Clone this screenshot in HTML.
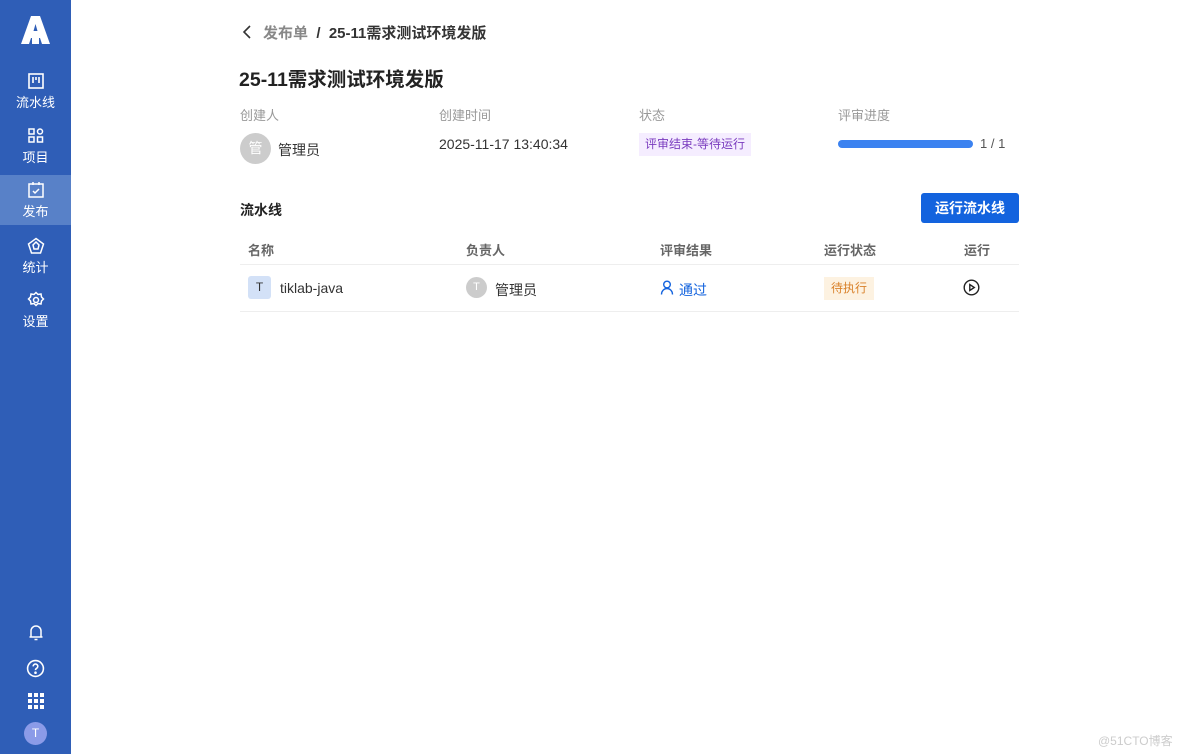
<!DOCTYPE html>
<html><head><meta charset="utf-8"><style>
*{margin:0;padding:0;box-sizing:border-box}
body{width:1184px;height:754px;background:#fff;font-family:"Liberation Sans","Noto Sans CJK SC",sans-serif;color:#333;position:relative;overflow:hidden}
.side{position:absolute;left:0;top:0;width:71px;height:754px;background:#2f5eb7}
.nav{position:absolute;left:0;width:71px;height:50px;color:#fff;text-align:center;font-size:13px}
.nav svg{display:block;margin:0 auto 2px}
.act{background:#5881c8}
.abs{position:absolute}
.lbl{font-size:13px;color:#999}
</style></head><body>
<div class="side">
 <svg class="abs" style="left:21px;top:16px" width="29" height="28" viewBox="0 0 29 28" fill="#fff"><path d="M10 0h9l10 28h-8l-2-6h-9l-2 6H0zM12.5 15h4l-2-7z"/><rect x="11" y="21" width="7" height="7"/></svg>
 <div class="nav" style="top:72px"><svg width="18" height="18" viewBox="0 0 18 18" fill="none" stroke="#fff" stroke-width="1.6"><rect x="2" y="2" width="14" height="14"/><path d="M6 5v6M9 5v3M12 5v6"/></svg>流水线</div>
 <div class="nav" style="top:127px"><svg width="18" height="18" viewBox="0 0 18 18" fill="none" stroke="#fff" stroke-width="1.5"><rect x="2" y="2" width="5" height="5"/><circle cx="13" cy="4.5" r="2.5"/><rect x="2" y="10" width="5" height="5"/><rect x="10.5" y="10" width="5" height="5"/></svg>项目</div>
 <div class="nav act" style="top:175px;padding-top:6px;height:50px"><svg width="18" height="18" viewBox="0 0 18 18" fill="none" stroke="#fff" stroke-width="1.5"><rect x="2" y="3" width="14" height="13"/><path d="M6 1v3M12 1v3M6 10l2 2 4-4"/></svg>发布</div>
 <div class="nav" style="top:237px"><svg width="18" height="18" viewBox="0 0 18 18" fill="none" stroke="#fff" stroke-width="1.5"><path d="M9 1.5L16.5 7 13.5 16h-9L1.5 7z"/><path d="M9 5l3 3-1 4H7L6 8z"/></svg>统计</div>
 <div class="nav" style="top:291px"><svg width="18" height="18" viewBox="0 0 18 18" fill="none" stroke="#fff" stroke-width="1.5"><path d="M9 1.5l2 2 3-.5.5 3 2 2-2 2-.5 3-3-.5-2 2-2-2-3 .5-.5-3-2-2 2-2 .5-3 3 .5z"/><circle cx="9" cy="9" r="2.5"/></svg>设置</div>
 <svg class="abs" style="left:27px;top:623px" width="18" height="18" viewBox="0 0 18 18" fill="none" stroke="#fff" stroke-width="1.5"><path d="M4 14V8a5 5 0 0110 0v6zM2.5 14h13M7.5 16.5h3"/></svg>
 <svg class="abs" style="left:26px;top:659px" width="19" height="19" viewBox="0 0 18 18" fill="none" stroke="#fff" stroke-width="1.5"><circle cx="9" cy="9" r="7.5"/><path d="M6.8 7a2.2 2.2 0 114 1.2c-.8.6-1.8 1-1.8 2.3"/><circle cx="9" cy="13" r=".5" fill="#fff"/></svg>
 <svg class="abs" style="left:28px;top:693px" width="16" height="16" viewBox="0 0 16 16" fill="#fff"><rect x="0" y="0" width="4" height="4"/><rect x="6" y="0" width="4" height="4"/><rect x="12" y="0" width="4" height="4"/><rect x="0" y="6" width="4" height="4"/><rect x="6" y="6" width="4" height="4"/><rect x="12" y="6" width="4" height="4"/><rect x="0" y="12" width="4" height="4"/><rect x="6" y="12" width="4" height="4"/><rect x="12" y="12" width="4" height="4"/></svg>
 <div class="abs" style="left:24px;top:722px;width:23px;height:23px;border-radius:50%;background:#8b9be8;color:#fff;font-size:12px;text-align:center;line-height:23px">T</div>
</div>

<svg class="abs" style="left:241px;top:24px" width="12" height="16" viewBox="0 0 12 16" fill="none" stroke="#333" stroke-width="1.6"><path d="M9 2L3 8l6 6"/></svg>
<div class="abs" style="left:263px;top:22px;font-size:15px;font-weight:bold;color:#888">发布单 <span style="color:#333">&nbsp;/&nbsp; 25-11需求测试环境发版</span></div>
<div class="abs" style="left:239px;top:63px;font-size:19.5px;font-weight:bold;color:#222">25-11需求测试环境发版</div>

<div class="abs lbl" style="left:240px;top:105px">创建人</div>
<div class="abs lbl" style="left:439px;top:105px">创建时间</div>
<div class="abs lbl" style="left:639px;top:105px">状态</div>
<div class="abs lbl" style="left:838px;top:105px">评审进度</div>
<div class="abs" style="left:240px;top:133px;width:31px;height:31px;border-radius:50%;background:#ccc;color:#fff;font-size:14px;text-align:center;line-height:31px">管</div>
<div class="abs" style="left:278px;top:140px;font-size:14px">管理员</div>
<div class="abs" style="left:439px;top:136px;font-size:14px">2025-11-17 13:40:34</div>
<div class="abs" style="left:639px;top:133px;width:112px;height:23px;background:#f5edff;color:#7a3bbf;font-size:12px;text-align:center;line-height:23px">评审结束-等待运行</div>
<div class="abs" style="left:838px;top:140px;width:135px;height:8px;border-radius:4px;background:#3b82f0"></div>
<div class="abs" style="left:980px;top:136px;font-size:13px;color:#555">1 / 1</div>

<div class="abs" style="left:240px;top:200px;font-size:14px;font-weight:bold;color:#222">流水线</div>
<div class="abs" style="left:921px;top:193px;width:98px;height:30px;background:#1363de;border-radius:3px;color:#fff;font-size:14px;font-weight:bold;text-align:center;line-height:30px">运行流水线</div>

<div class="abs" style="left:240px;top:232px;width:779px;height:33px;border-bottom:1px solid #eee;font-size:13px;font-weight:bold;color:#666">
 <span class="abs" style="left:8px;top:8px">名称</span><span class="abs" style="left:226px;top:8px">负责人</span><span class="abs" style="left:420px;top:8px">评审结果</span><span class="abs" style="left:584px;top:8px">运行状态</span><span class="abs" style="left:724px;top:8px">运行</span>
</div>
<div class="abs" style="left:240px;top:265px;width:779px;height:47px;border-bottom:1px solid #eee;font-size:14px">
 <div class="abs" style="left:8px;top:11px;width:23px;height:23px;border-radius:3px;background:#d3e1f7;font-size:12px;text-align:center;line-height:23px;color:#333">T</div>
 <span class="abs" style="left:40px;top:15px">tiklab-java</span>
 <div class="abs" style="left:226px;top:12px;width:21px;height:21px;border-radius:50%;background:#ccc;color:#fff;font-size:11px;text-align:center;line-height:21px">T</div>
 <span class="abs" style="left:255px;top:15px">管理员</span>
 <svg class="abs" style="left:420px;top:15px" width="14" height="15" viewBox="0 0 14 15" fill="none" stroke="#1363de" stroke-width="1.4"><circle cx="7" cy="4.5" r="3.3"/><path d="M1.5 14.5c0-3.5 2.5-6 5.5-6s5.5 2.5 5.5 6"/></svg>
 <span class="abs" style="left:439px;top:15px;color:#1363de">通过</span>
 <div class="abs" style="left:584px;top:12px;width:50px;height:23px;background:#fdf2e1;color:#d9822b;font-size:12px;text-align:center;line-height:23px">待执行</div>
 <svg class="abs" style="left:723px;top:14px" width="17" height="17" viewBox="0 0 17 17" fill="none" stroke="#222" stroke-width="1.4"><circle cx="8.5" cy="8.5" r="7.3"/><path d="M6.8 5.5v6l4.5-3z"/></svg>
</div>
<div class="abs" style="left:1098px;top:732px;font-size:12px;color:#ccc">@51CTO博客</div>
</body></html>
